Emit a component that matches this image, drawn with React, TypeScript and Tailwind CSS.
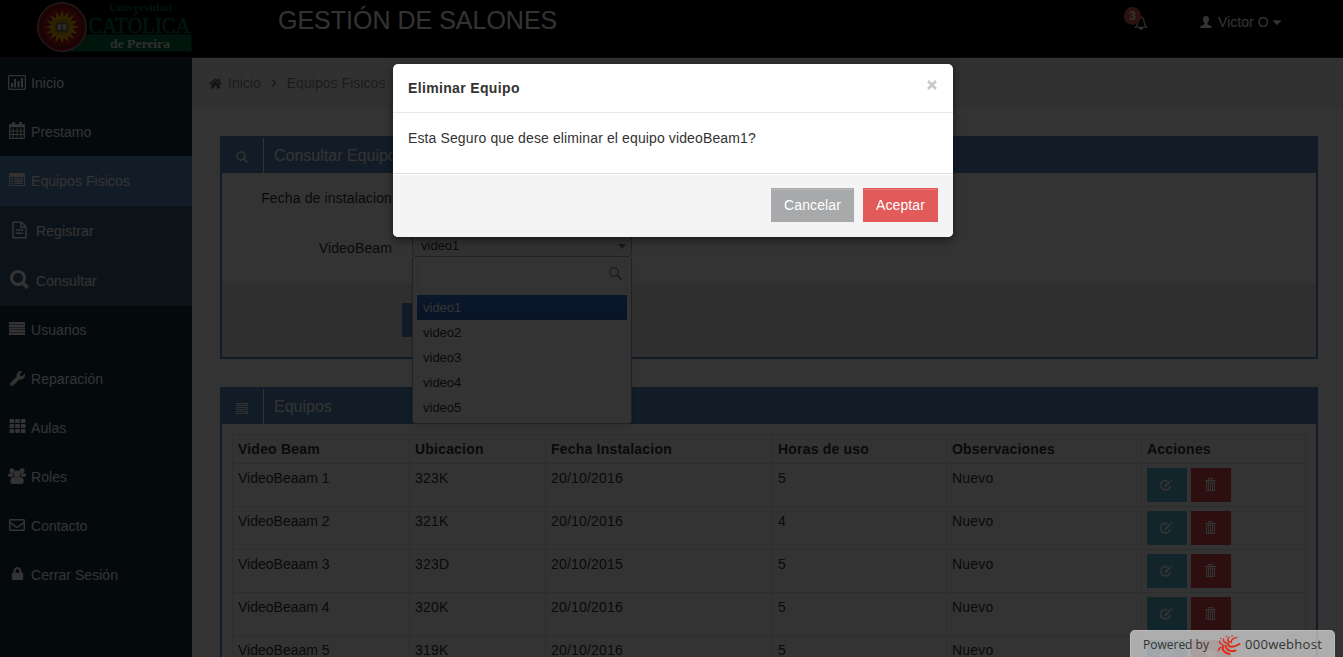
import React from "react";
import { FaWrench, FaTh, FaRegEnvelope, FaLock, FaHome, FaCaretDown } from "react-icons/fa";

type P = { className?: string };

const BarChart = ({ className }: P) => (
  <svg viewBox="0 0 18 15" className={className} fill="currentColor">
    <path fillRule="evenodd" d="M1.500 0h15A1.500 1.500 0 0 1 18 1.500v12a1.500 1.500 0 0 1-1.500 1.500h-15A1.500 1.500 0 0 1 0 13.500v-12A1.500 1.500 0 0 1 1.500 0zM1.300 1.300v12.400h15.400V1.300z" />
    <path d="M3 8h2v4.500H3zM6 4h2v8.500H6zM9.500 6h2v6.500h-2zM13 3h2v9.500h-2z" />
  </svg>
);
const Calendar = ({ className }: P) => (
  <svg viewBox="0 0 16 17" className={className} fill="none" stroke="currentColor">
    <path d="M.7 3h14.600v13.300H.7z" strokeWidth="1.300" />
    <path d="M1 4h14" strokeWidth="2.500" />
    <path d="M4.500 0v4.500M11.500 0v4.500" strokeWidth="2.600" />
    <path d="M4.200 6v10M8 6v10M11.800 6v10M1 9h14M1 12.500h14" strokeWidth="1" />
  </svg>
);
const ListAlt = ({ className }: P) => (
  <svg viewBox="0 0 16 13" className={className} fill="currentColor">
    <path fillRule="evenodd" d="M1 0h14a1 1 0 0 1 1 1v11a1 1 0 0 1-1 1H1a1 1 0 0 1-1-1V1a1 1 0 0 1 1-1zM1 4v8h14V4z" />
    <path d="M2 5h2v1.300H2zM5 5h9v1.300H5zM2 7.300h2v1.400H2zM5 7.300h9v1.400H5zM2 9.700h2V11H2zM5 9.700h9V11H5z" />
  </svg>
);
const FileText = ({ className }: P) => (
  <svg viewBox="0 0 16 18" className={className} fill="none" stroke="currentColor" strokeWidth="1.600" strokeLinejoin="round">
    <path d="M1 .8h9l5 5v11.400H1zM9.500 1v5H15M4 9h8M4 12.500h8" />
  </svg>
);
const Search = ({ className }: P) => (
  <svg viewBox="0 0 19 19" className={className} fill="none" stroke="currentColor">
    <circle cx="8" cy="8" r="6.500" strokeWidth="3" />
    <path d="m12.500 12.500 5.300 5.300" strokeWidth="3.600" />
  </svg>
);
const Justify = ({ className }: P) => (
  <svg viewBox="0 0 16 13" className={className} fill="currentColor">
    <path d="M0 0h16v2.200H0zM0 2.700h16v2.200H0zM0 5.400h16v2.200H0zM0 8.100h16v2.200H0zM0 10.800h16V13H0z" />
  </svg>
);
const Group = ({ className }: P) => (
  <svg viewBox="0 0 18 16" className={className} fill="currentColor">
    <circle cx="4" cy="2.700" r="2.500" />
    <circle cx="14" cy="2.700" r="2.500" />
    <path d="M1.500 5.500h3.800C4.800 7 5 8 5.500 8.800H2C.8 8.800 0 8.300 0 7.300 0 6.300.3 5.500 1.500 5.500zM16.500 5.500h-3.800c.5 1.500.3 2.500-.2 3.300H16c1.200 0 2-.5 2-1.500s-.3-1.800-1.500-1.800z" />
    <circle cx="9" cy="5.800" r="3.400" />
    <path d="M5.500 9.200h7c2.500 0 3.200 2 3.200 4.300 0 1.700-1 2.500-2.500 2.500H4.800c-1.500 0-2.500-.8-2.500-2.500 0-2.300.7-4.300 3.200-4.300z" />
  </svg>
);
const Rows = ({ className }: P) => (
  <svg viewBox="0 0 12 11" className={className} fill="none" stroke="currentColor">
    <path d="M.5.5h11v2H.5zM.5 4.500h11v2H.5zM.5 8.500h11v2H.5z" />
  </svg>
);
const Bell = ({ className }: P) => (
  <svg viewBox="0 0 14 15" className={className} fill="none" stroke="currentColor" strokeWidth="1.100">
    <path d="M7 1.500C4.500 1.800 3.800 3.600 3.800 6c0 3-.9 4.500-2.800 6h12c-1.900-1.500-2.800-3-2.800-6 0-2.400-.7-4.200-3.200-4.500zM7 0v1.500" />
    <path d="M5.200 12.500a1.800 1.800 0 0 0 3.600 0z" fill="currentColor" />
  </svg>
);
const User = ({ className }: P) => (
  <svg viewBox="0 0 12 12" className={className} fill="currentColor">
    <path d="M6 0c2 0 3 1.200 3 3.200 0 1.700-.7 2.900-1.500 3.800v1.200C8 9 12 9.300 12 12H0c0-2.700 4-3 4.500-3.800V7C3.700 6.100 3 4.900 3 3.200 3 1.200 4 0 6 0z" />
  </svg>
);
const Edit = ({ className }: P) => (
  <svg viewBox="0 0 13 12" className={className} fill="none" stroke="currentColor" strokeWidth="1.600">
    <path d="M7.500 1.600H3.200L1 3.800v4.600l2.200 2.200h4.600L10 8.400V7" />
    <path d="M4.800 7.800 9.800 2.500" strokeWidth="2" />
    <path d="M10.700 1.700 11.900.6" strokeWidth="2" />
  </svg>
);
const Trash = ({ className }: P) => (
  <svg viewBox="0 0 11 13" className={className} fill="none" stroke="currentColor">
    <path d="M3.500 2V.5h4V2M0 2.500h11M1.500 4v8.500h8V4zM3.500 4v8M5.500 4v8M7.500 4v8" />
  </svg>
);

const Logo = () => {
  const rays = Array.from({ length: 32 }, (_, i) => {
    const a = (i * Math.PI) / 16;
    const r = i % 2 ? 10.5 : 17;
    return `${25 + r * Math.cos(a)},${25 + r * Math.sin(a)}`;
  }).join(" ");
  return (
    <svg viewBox="0 0 156 52" className="h-[52px] w-[156px]">
      <rect x="25" y="32.500" width="129.500" height="17" fill="#006b3c" />
      <circle cx="25" cy="25" r="24.300" fill="#a5141c" stroke="#b8b8b8" />
      <circle cx="25" cy="25" r="20.800" fill="none" stroke="#5b1010" strokeWidth="2.500" strokeDasharray="2 1.500" />
      <circle cx="25" cy="25" r="18" fill="#b0151d" />
      <polygon points={rays} fill="#e0b400" />
      <circle cx="25" cy="25" r="8" fill="#c79300" />
      <path d="M20 21.500q2.500-1 5 0 2.500-1 5 0v7.500q-2.500-1-5 0-2.500-1-5 0z" fill="#ccc" stroke="#333" strokeWidth=".8" />
      <path d="M25 21.500V29" stroke="#333" />
      <text x="72" y="9" textLength="63" lengthAdjust="spacingAndGlyphs" fontFamily="Liberation Serif, serif" fontWeight="700" fontSize="11" fill="#006b3c">Universidad</text>
      <text x="51.500" y="30.500" textLength="102" lengthAdjust="spacingAndGlyphs" fontFamily="Liberation Serif, serif" fontSize="23" stroke="#006b3c" strokeWidth=".6" fill="#006b3c">CATÓLICA</text>
      <text x="73" y="46" textLength="60" lengthAdjust="spacingAndGlyphs" fontFamily="Liberation Serif, serif" fontWeight="700" fontSize="13" fill="#e5e5e5">de Pereira</text>
    </svg>
  );
};

const NavItem = ({ icon, label, active }: { icon: React.ReactNode; label: string; active?: boolean }) => (
  <li className={`flex items-center pl-2 ${active ? "h-[50px] bg-[#558bc0]" : "h-[49px]"}`}>
    <span className="flex w-[18px] justify-center">{icon}</span>
    <span className="ml-[5px] tracking-[0.050px]">{label}</span>
  </li>
);
const SubItem = ({ icon, label }: { icon: React.ReactNode; label: string }) => (
  <li className="flex h-[50px] items-center bg-[#3f6078] pl-[10px]">
    <span className="flex w-[19px] justify-center">{icon}</span>
    <span className="ml-[7px] tracking-[0.100px]">{label}</span>
  </li>
);

const PanelHead = ({ icon, title }: { icon: React.ReactNode; title: string }) => (
  <div className="flex h-[35px] bg-[#558bc0] text-white">
    <div className="flex w-[42px] items-center justify-center border-r border-white pt-[3px] pr-px">{icon}</div>
    <h2 className="pl-[10px] text-base leading-[35px]">{title}</h2>
  </div>
);

const heads = ["Video Beam", "Ubicacion", "Fecha Instalacion", "Horas de uso", "Observaciones", "Acciones"];
const data = [
  ["VideoBeaam 1", "323K", "20/10/2016", "5", "Nuevo"],
  ["VideoBeaam 2", "321K", "20/10/2016", "4", "Nuevo"],
  ["VideoBeaam 3", "323D", "20/10/2015", "5", "Nuevo"],
  ["VideoBeaam 4", "320K", "20/10/2016", "5", "Nuevo"],
  ["VideoBeaam 5", "319K", "20/10/2016", "5", "Nuevo"],
];
const cols = "grid grid-cols-[177px_136px_227px_174px_195px_164px]";

export default function App() {
  return (
    <div className="relative h-[657px] w-[1343px] overflow-hidden bg-white font-['Liberation_Sans',Arial,sans-serif] text-sm leading-5 text-[#333]">
      <header className="flex h-[58px] border-b border-[#333] bg-black text-white">
        <div className="w-[278px] pt-[2px] pl-[37px]"><Logo /></div>
        <h1 className="w-[846px] pt-[3px] text-[25px] leading-[34px]">GESTIÓN DE SALONES</h1>
        <div className="relative h-8 w-[75px]">
          <Bell className="absolute top-4 left-[10px] h-[14px] w-[14px]" />
          <span className="absolute top-[7px] left-0 flex h-[18px] w-[17px] items-center justify-center rounded-full bg-[#e25856] text-xs font-bold">3</span>
        </div>
        <div className="flex h-11 items-center">
          <User className="mr-[6px] ml-px h-3 w-3" />
          <span className="tracking-[0.050px]">Victor O</span>
          <FaCaretDown className="ml-[2px] h-[14px] w-3" />
        </div>
      </header>

      <div className="flex h-[599px]">
        <ul className="w-48 shrink-0 bg-[#142d3c] text-white">
          <NavItem icon={<BarChart className="mb-px h-[15px] w-[18px]" />} label="Inicio" />
          <NavItem icon={<Calendar className="mb-[2px] h-[17px] w-4" />} label="Prestamo" />
          <NavItem active icon={<ListAlt className="mb-[3px] h-[13px] w-4" />} label="Equipos Fisicos" />
          <SubItem icon={<FileText className="mb-[3px] h-[18px] w-[15px]" />} label="Registrar" />
          <SubItem icon={<Search className="mb-[3px] size-[19px]" />} label="Consultar" />
          <li className="-mt-px">
            <ul>
              <NavItem icon={<Justify className="mb-[3px] h-[13px] w-4" />} label="Usuarios" />
              <NavItem icon={<FaWrench className="mb-px size-[15px]" />} label="Reparación" />
              <NavItem icon={<FaTh className="mb-[3px] h-4 w-[17px]" />} label="Aulas" />
              <NavItem icon={<Group className="mb-[2px] h-4 w-[18px]" />} label="Roles" />
              <NavItem icon={<FaRegEnvelope className="mb-px size-4" />} label="Contacto" />
              <NavItem icon={<FaLock className="mb-[3px] size-[13px]" />} label="Cerrar Sesión" />
            </ul>
          </li>
        </ul>

        <main className="min-w-0 flex-1">
          <nav className="flex h-[50px] items-center bg-[#f5f5f5] pl-[17px] text-[#888]">
            <FaHome className="h-[13px] w-[13px] text-[#666]" />
            <span className="ml-[6px]">Inicio</span>
            <svg viewBox="0 0 6 10" className="mr-[10px] ml-[10px] h-2 w-[6px]" fill="none" stroke="#666" strokeWidth="1.600"><path d="m1 1 4 4-4 4" /></svg>
            <span className="tracking-[0.050px]">Equipos Fisicos</span>
          </nav>

          <div className="pt-7 pr-[25px] pl-7">
            <section className="border-2 border-[#558bc0]">
              <PanelHead icon={<svg viewBox="0 0 12 12" className="size-3" fill="none" stroke="currentColor" strokeWidth="1.500"><circle cx="5" cy="5" r="4" /><path d="m8 8 3.500 3.500" /></svg>} title="Consultar Equipos" />
              <div className="flex h-[110px] flex-col gap-[30px] pt-[15px] tracking-[0.120px]">
                <div className="w-[170px] text-right">Fecha de instalacion</div>
                <div className="w-[170px] text-right">VideoBeam</div>
              </div>
              <div className="h-[74px] bg-[#ebebeb] pt-5 pl-[180px]">
                <div className="h-[34px] w-[90px] bg-[#558bc0]" />
              </div>
            </section>

            <section className="mt-7 border-2 border-[#558bc0]">
              <PanelHead icon={<Rows className="h-[11px] w-3" />} title="Equipos" />
              <div className="h-[300px] p-[10px] tracking-[0.200px]">
                <div className="w-[1074px] border-t border-l border-[#e5e5e5]">
                  <div className={cols}>
                    {heads.map((h) => (
                      <div key={h} className="h-[29px] border-r border-b border-[#e5e5e5] pt-[4px] pl-[5px] font-bold">{h}</div>
                    ))}
                  </div>
                  {data.map((row) => (
                    <div key={row[0]} className={cols}>
                      {row.map((c, i) => (
                        <div key={i} className={`h-[43px] border-r border-b border-[#e5e5e5] pt-[4px] pl-[5px] ${i === 0 ? "tracking-normal" : ""}`}>{c}</div>
                      ))}
                      <div className="flex h-[43px] gap-1 border-r border-b border-[#e5e5e5] pt-1 pl-[5px] text-white">
                        <span className="flex h-[34px] w-10 items-center justify-center bg-[#5ab8d4] pr-[2px]"><Edit className="h-3 w-[13px]" /></span>
                        <span className="flex h-[34px] w-10 items-center justify-center bg-[#d94a48] pr-px pb-px"><Trash className="h-[13px] w-[11px]" /></span>
                      </div>
                    </div>
                  ))}
                </div>
              </div>
            </section>
          </div>
        </main>
      </div>

      <div className="absolute top-[224px] left-[412px] w-[220px] text-[13px]">
        <div className="flex h-[33px] items-end justify-between rounded-b border border-[#aaa] bg-[#f6f6f6] pr-[5px] pl-2">
          <span>video1</span>
          <span className="mb-[7px] border-x-4 border-t-[5px] border-x-transparent border-t-[#777]" />
        </div>
        <div className="h-[167px] rounded-b border border-t-0 border-[#aaa] bg-white px-1 pt-1 shadow-md">
          <div className="flex h-[29px] justify-end border border-[#e8e8e8] pt-[5px] pr-1">
            <svg viewBox="0 0 13 13" className="size-[13px]" fill="none" stroke="#666"><circle cx="5" cy="5" r="4.300" /><path d="m8 8 4.500 4.500" strokeWidth="1.300" /></svg>
          </div>
          <ul className="mt-[5px]">
            {["video1", "video2", "video3", "video4", "video5"].map((v, i) => (
              <li key={v} className={`h-[25px] pl-[6px] leading-[25px] ${i === 0 ? "bg-linear-to-b from-[#3875d7] to-[#2a62bc] text-white" : ""}`}>{v}</li>
            ))}
          </ul>
        </div>
      </div>

      <div className="absolute inset-0 bg-black/80" />

      <div role="dialog" className="absolute top-16 left-[393px] h-[173px] w-[560px] overflow-hidden rounded-[5px] bg-white shadow-[0_3px_9px_rgba(0,0,0,0.5)]">
        <div className="flex h-[49px] items-center justify-between border-b border-[#e9e9e9] px-[15px]">
          <h4 className="font-bold tracking-[0.350px]">Eliminar Equipo</h4>
          <svg viewBox="0 0 10 10" className="mr-px mb-[6px] size-[10px]" stroke="#c8c8c8" strokeWidth="2.600"><path d="m1 1 8 8M9 1 1 9" /></svg>
        </div>
        <div className="h-[60px] px-[15px] pt-[15px] tracking-[0.120px]">Esta Seguro que dese eliminar el equipo videoBeam1?</div>
        <div className="border-t border-[#ddd]">
          <div className="mt-px flex h-[62px] justify-end gap-[9px] bg-[#f4f4f4] pt-[13px] pr-[15px] text-white">
            <button className="h-[34px] w-[83px] border border-[#a7a9aa] bg-[#a7a9aa] tracking-[0.120px] shadow-[inset_0_1px_0_rgba(255,255,255,0.2)]">Cancelar</button>
            <button className="h-[34px] w-[75px] border border-[#e25a59] bg-[#e25a59] tracking-[0.120px] shadow-[inset_0_1px_0_rgba(255,255,255,0.2)]">Aceptar</button>
          </div>
        </div>
      </div>

      <div className="absolute top-[630px] left-[1130px] flex h-[30px] w-[205px] items-center rounded-t-[5px] border border-white/20 bg-white/60 pl-3 font-['Open_Sans',sans-serif] text-xs text-[#333]">
        <span className="w-[74px]">Powered by</span>
        <svg viewBox="0 0 24 20" className="mb-px h-5 w-6" fill="none" stroke="#e02b18" strokeLinecap="round">
          <path d="M11 9.500c1 3 6 3 11.500-.5M8.500 10.500c.5 5 5 6.500 10 5" strokeWidth="1.900" />
          <path d="M6 11c-1 4 1 7 6.500 8" strokeWidth="2" />
          <path d="M11.500 8C8 8.500 6 6.500 6.500 4M13 7c-2.500-.5-3-3-1-4.500M14.500 7.500c-.5-2 .8-4 3.500-4.500M5.500 9.500C3.500 9 2.500 8 2.500 6.500M4 12.500c-1.500.5-2.500 1.500-2.500 3" strokeWidth="1.400" />
          <path d="M9.500 1.500h.1M15 1h.1M19.500 2.500h.1M4 3.500h.1" strokeWidth="1.600" />
        </svg>
        <span className="ml-1 text-[13px] tracking-[0.280px]">000webhost</span>
      </div>
    </div>
  );
}
